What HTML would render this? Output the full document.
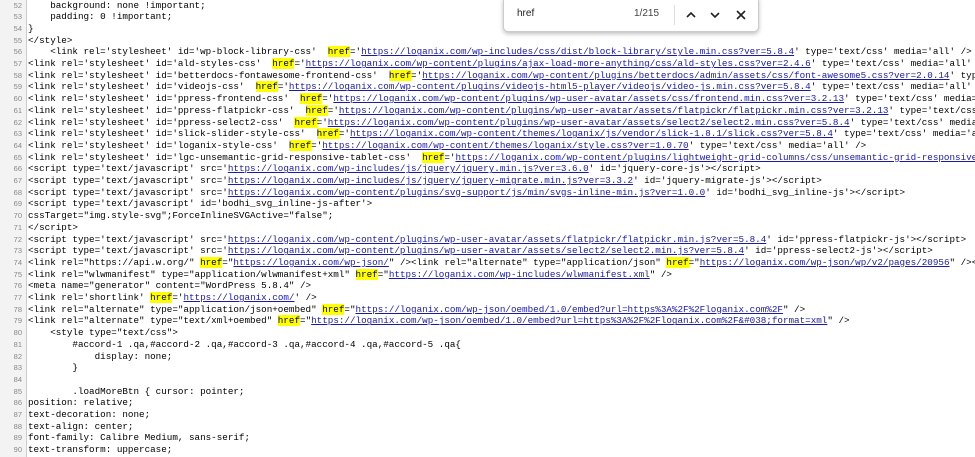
<!DOCTYPE html>
<html><head><meta charset="utf-8"><style>
html,body{margin:0;width:975px;height:457px;overflow:hidden;}
body{background:#fff;position:relative;font-family:"Liberation Mono",monospace;}
#g{position:absolute;left:0;top:0;width:26px;height:457px;background:#f3f3f3;border-right:1px solid #ccc;}
#lines{position:absolute;left:0;top:0;width:975px;height:457px;overflow:hidden;}
.l{position:absolute;left:0;height:11.7px;line-height:11.7px;font-size:9.25px;white-space:pre;color:#000;}
.n{position:absolute;left:0;width:22px;text-align:right;font-size:7.5px;color:#888;font-family:"Liberation Sans",sans-serif;}
.c{position:absolute;left:28px;}
a{color:#1a1aa6;text-decoration:underline;}
b{font-weight:normal;background:#ffff00;}
#f{position:absolute;left:503px;top:-2px;width:254px;height:32px;background:#fff;border:1px solid #ccc;border-radius:0 0 5px 5px;box-shadow:0 2px 4px rgba(0,0,0,.25);font-family:"Liberation Sans",sans-serif;font-size:10px;}
</style></head><body>
<div id="g"></div>
<div id="lines"></div>
<div id="f">
<span style="position:absolute;left:13px;top:9px;color:#222">href</span>
<span style="position:absolute;left:130px;top:9px;color:#444">1/215</span>
<div style="position:absolute;left:170px;top:6px;width:1px;height:20px;background:#ddd"></div>
<svg style="position:absolute;left:180px;top:8px" width="70" height="16"><path d="M3 10 L7 6 L11 10" fill="none" stroke="#222" stroke-width="1.6"/><path d="M27 6 L31 10 L35 6" fill="none" stroke="#222" stroke-width="1.6"/><path d="M53 4 L61 12 M61 4 L53 12" stroke="#222" stroke-width="1.6"/></svg>
</div>
<script>
var L=[
"    background: none !important;",
"    padding: 0 !important;",
"}",
"&lt;/style>",
"    &lt;link rel='stylesheet' id='wp-block-library-css'  H='U/wp-includes/css/dist/block-library/style.min.css?ver=5.8.4E type='text/css' media='all' />",
"&lt;link rel='stylesheet' id='ald-styles-css'  H='U/wp-content/plugins/ajax-load-more-anything/css/ald-styles.css?ver=2.4.6E type='text/css' media='all' />",
"&lt;link rel='stylesheet' id='betterdocs-fontawesome-frontend-css'  H='U/wp-content/plugins/betterdocs/admin/assets/css/font-awesome5.css?ver=2.0.14E type='text/css' media='all' />",
"&lt;link rel='stylesheet' id='videojs-css'  H='U/wp-content/plugins/videojs-html5-player/videojs/video-js.min.css?ver=5.8.4E type='text/css' media='all' />",
"&lt;link rel='stylesheet' id='ppress-frontend-css'  H='U/wp-content/plugins/wp-user-avatar/assets/css/frontend.min.css?ver=3.2.13E type='text/css' media='all' />",
"&lt;link rel='stylesheet' id='ppress-flatpickr-css'  H='U/wp-content/plugins/wp-user-avatar/assets/flatpickr/flatpickr.min.css?ver=3.2.13E type='text/css' media='all' />",
"&lt;link rel='stylesheet' id='ppress-select2-css'  H='U/wp-content/plugins/wp-user-avatar/assets/select2/select2.min.css?ver=5.8.4E type='text/css' media='all' />",
"&lt;link rel='stylesheet' id='slick-slider-style-css'  H='U/wp-content/themes/loganix/js/vendor/slick-1.8.1/slick.css?ver=5.8.4E type='text/css' media='all' />",
"&lt;link rel='stylesheet' id='loganix-style-css'  H='U/wp-content/themes/loganix/style.css?ver=1.0.70E type='text/css' media='all' />",
"&lt;link rel='stylesheet' id='lgc-unsemantic-grid-responsive-tablet-css'  H='U/wp-content/plugins/lightweight-grid-columns/css/unsemantic-grid-responsive-tablet.cssE type='text/css' />",
"&lt;script type='text/javascript' src='<a>https://loganix.com/wp-includes/js/jquery/jquery.min.js?ver=3.6.0</a>' id='jquery-core-js'>&lt;/script>",
"&lt;script type='text/javascript' src='<a>https://loganix.com/wp-includes/js/jquery/jquery-migrate.min.js?ver=3.3.2</a>' id='jquery-migrate-js'>&lt;/script>",
"&lt;script type='text/javascript' src='<a>https://loganix.com/wp-content/plugins/svg-support/js/min/svgs-inline-min.js?ver=1.0.0</a>' id='bodhi_svg_inline-js'>&lt;/script>",
"&lt;script type='text/javascript' id='bodhi_svg_inline-js-after'>",
"cssTarget=\"img.style-svg\";ForceInlineSVGActive=\"false\";",
"&lt;/script>",
"&lt;script type='text/javascript' src='<a>https://loganix.com/wp-content/plugins/wp-user-avatar/assets/flatpickr/flatpickr.min.js?ver=5.8.4</a>' id='ppress-flatpickr-js'>&lt;/script>",
"&lt;script type='text/javascript' src='<a>https://loganix.com/wp-content/plugins/wp-user-avatar/assets/select2/select2.min.js?ver=5.8.4</a>' id='ppress-select2-js'>&lt;/script>",
"&lt;link rel=\"https://api.w.org/\" <b>href</b>=\"<a>https://loganix.com/wp-json/</a>\" />&lt;link rel=\"alternate\" type=\"application/json\" <b>href</b>=\"<a>https://loganix.com/wp-json/wp/v2/pages/20956</a>\" />&lt;link",
"&lt;link rel=\"wlwmanifest\" type=\"application/wlwmanifest+xml\" <b>href</b>=\"<a>https://loganix.com/wp-includes/wlwmanifest.xml</a>\" />",
"&lt;meta name=\"generator\" content=\"WordPress 5.8.4\" />",
"&lt;link rel='shortlink' <b>href</b>='<a>https://loganix.com/</a>' />",
"&lt;link rel=\"alternate\" type=\"application/json+oembed\" <b>href</b>=\"<a>https://loganix.com/wp-json/oembed/1.0/embed?url=https%3A%2F%2Floganix.com%2F</a>\" />",
"&lt;link rel=\"alternate\" type=\"text/xml+oembed\" <b>href</b>=\"<a>https://loganix.com/wp-json/oembed/1.0/embed?url=https%3A%2F%2Floganix.com%2F&amp;#038;format=xml</a>\" />",
"    &lt;style type=\"text/css\">",
"        #accord-1 .qa,#accord-2 .qa,#accord-3 .qa,#accord-4 .qa,#accord-5 .qa{",
"            display: none;",
"        }",
"",
"        .loadMoreBtn { cursor: pointer;",
"position: relative;",
"text-decoration: none;",
"text-align: center;",
"font-family: Calibre Medium, sans-serif;",
"text-transform: uppercase;"
];
var h="";
for(var i=0;i<L.length;i++){
 var s=L[i].replace("H='U","<b>href</b>='<a>https://loganix.com").replace("E type","</a>' type");
 var t=(i*11.7-0.5).toFixed(1);
 h+='<div class="l" style="top:'+t+'px"><span class="n">'+(52+i)+'</span><span class="c">'+s+'</span></div>';
}
document.getElementById('lines').innerHTML=h;
</script>
</body></html>
